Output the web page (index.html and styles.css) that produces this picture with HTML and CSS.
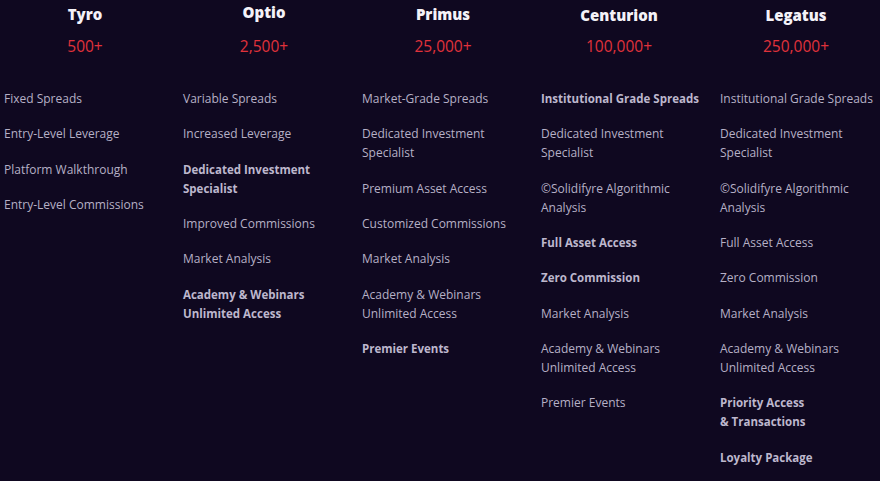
FILE: index.html
```html
<!DOCTYPE html>
<html lang="en">
<head>
<meta charset="utf-8">
<title>Tiers</title>
<link rel="stylesheet" href="styles.css">
</head>
<body>
<div class="tiers">
  <section class="tier">
    <header class="head">
      <h3 class="name">Tyro</h3>
      <div class="price">500+</div>
    </header>
    <ul class="feats">
      <li>Fixed Spreads</li>
      <li>Entry-Level Leverage</li>
      <li>Platform Walkthrough</li>
      <li>Entry-Level Commissions</li>
    </ul>
  </section>
  <section class="tier">
    <header class="head">
      <h3 class="name up">Optio</h3>
      <div class="price">2,500+</div>
    </header>
    <ul class="feats">
      <li>Variable Spreads</li>
      <li>Increased Leverage</li>
      <li class="b">Dedicated Investment<br>Specialist</li>
      <li>Improved Commissions</li>
      <li>Market Analysis</li>
      <li class="b">Academy &amp; Webinars<br>Unlimited Access</li>
    </ul>
  </section>
  <section class="tier">
    <header class="head">
      <h3 class="name">Primus</h3>
      <div class="price">25,000+</div>
    </header>
    <ul class="feats">
      <li>Market-Grade Spreads</li>
      <li>Dedicated Investment<br>Specialist</li>
      <li>Premium Asset Access</li>
      <li>Customized Commissions</li>
      <li>Market Analysis</li>
      <li>Academy &amp; Webinars<br>Unlimited Access</li>
      <li class="b">Premier Events</li>
    </ul>
  </section>
  <section class="tier fourth">
    <header class="head">
      <h3 class="name down">Centurion</h3>
      <div class="price">100,000+</div>
    </header>
    <ul class="feats">
      <li class="b">Institutional Grade Spreads</li>
      <li>Dedicated Investment<br>Specialist</li>
      <li>©Solidifyre Algorithmic<br>Analysis</li>
      <li class="b">Full Asset Access</li>
      <li class="b">Zero Commission</li>
      <li>Market Analysis</li>
      <li>Academy &amp; Webinars<br>Unlimited Access</li>
      <li>Premier Events</li>
    </ul>
  </section>
  <section class="tier fifth">
    <header class="head">
      <h3 class="name down">Legatus</h3>
      <div class="price">250,000+</div>
    </header>
    <ul class="feats">
      <li>Institutional Grade Spreads</li>
      <li>Dedicated Investment<br>Specialist</li>
      <li>©Solidifyre Algorithmic<br>Analysis</li>
      <li>Full Asset Access</li>
      <li>Zero Commission</li>
      <li>Market Analysis</li>
      <li>Academy &amp; Webinars<br>Unlimited Access</li>
      <li class="b">Priority Access<br>&amp; Transactions</li>
      <li class="b">Loyalty Package</li>
    </ul>
  </section>
</div>
</body>
</html>
```
FILE: styles.css
```css
html, body {
  margin: 0;
  padding: 0;
  background: #0f0820;
  overflow: hidden;
}
body {
  font-family: "Open Sans", "DejaVu Sans", sans-serif;
  color: #b6b0c6;
}
.tiers {
  display: grid;
  grid-template-columns: repeat(5, 162px);
  column-gap: 17px;
  padding-left: 4px;
}
.tier {
  display: flex;
  flex-direction: column;
}
.head {
  display: flex;
  flex-direction: column;
  align-items: center;
}
.fourth .head { padding-right: 6px; }
.fifth .head { padding-right: 10px; }
.name {
  margin: 3px 0 0;
  height: 22px;
  line-height: 22px;
  font-size: 15px;
  font-weight: 800;
  color: #f4f2f8;
}
.name.up { margin-top: 1px; margin-bottom: 2px; }
.name.down { margin-top: 4px; margin-bottom: -1px; }
.price {
  margin-top: 11px;
  height: 20px;
  line-height: 20px;
  font-size: 15.5px;
  color: #e0323b;
}
.feats {
  list-style: none;
  margin: 33px 0 0;
  padding: 0;
  display: flex;
  flex-direction: column;
  gap: 16.33px;
}
.feats li {
  font-size: 12px;
  line-height: 19px;
  white-space: nowrap;
}
.feats li.b {
  font-size: 11.5px;
  font-weight: 700;
  color: #bdb7cd;
}
```
